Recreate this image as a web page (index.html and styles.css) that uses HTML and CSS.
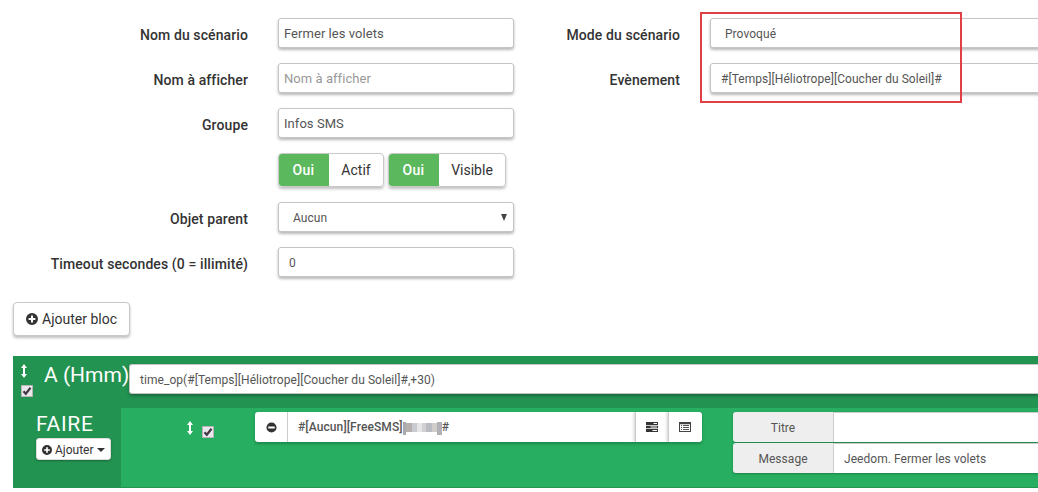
FILE: index.html
```html
<!DOCTYPE html>
<html lang="fr">
<head>
<meta charset="utf-8">
<title>Scénario</title>
<link rel="stylesheet" href="styles.css">
</head>
<body>
<svg class="defs" aria-hidden="true">
  <symbol id="plus" viewBox="0 0 12 12"><path fill="currentColor" fill-rule="evenodd" d="M6 0a6 6 0 1 0 0 12A6 6 0 0 0 6 0zM5 2.6h2V5h2.4v2H7v2.4H5V7H2.6V5H5z"/></symbol>
  <symbol id="minus" viewBox="0 0 12 12"><path fill="currentColor" fill-rule="evenodd" d="M6 .5a5.5 5.5 0 1 0 0 11 5.5 5.5 0 0 0 0-11zM2.5 4.8h7v2.4h-7z"/></symbol>
  <symbol id="arrows" viewBox="0 0 6 14"><path fill="currentColor" d="M3 0l3 4H4v6h2l-3 4-3-4h2V4H0z"/></symbol>
  <symbol id="check" viewBox="0 0 12 12"><path fill="#ebe8eb" stroke="#b9b4b9" d="M.5.5h11v11H.5z"/><path fill="none" stroke="#443848" stroke-width="2.200" d="M2.500 6.200l2.300 2.500 4.700-6"/></symbol>
  <symbol id="tasks" viewBox="0 0 12 10"><path fill="#333" d="M0 0h12v3H0zM0 3.700h12v2.600H0zM0 7h12v3H0z"/><path fill="#fff" d="M7.500 1H11v1H7.500zM4.500 4.500H11v1H4.500zM6.500 8H11v1H6.500z"/></symbol>
  <symbol id="list" viewBox="0 0 12 10"><path fill="#444" d="M0 0h12v10H0z"/><path fill="#fff" d="M1 2.200h10V9H1z"/><path fill="#555" d="M2 3h1v1H2zM4 3h6v1H4zM2 5h1v1H2zM4 5h6v1H4zM2 7h1v1H2zM4 7h6v1H4z"/></symbol>
</svg>

<main class="page">
  <form class="settings">
    <div class="fields">
      <label class="label">Nom du scénario</label><div class="control tight">Fermer les volets</div>
      <label class="label">Nom à afficher</label><div class="control tight placeholder">Nom à afficher</div>
      <label class="label">Groupe</label><div class="control tight">Infos SMS</div>
      <span></span>
      <div class="toggles">
        <div class="toggle"><b class="on">Oui</b><span class="name">Actif</span></div>
        <div class="toggle"><b class="on">Oui</b><span class="name wide">Visible</span></div>
      </div>
      <label class="label">Objet parent</label><div class="control select">Aucun<span class="arrow"></span></div>
      <label class="label">Timeout secondes (0 = illimité)</label><div class="control">0</div>
    </div>
    <div class="fields mode">
      <label class="label">Mode du scénario</label><div class="control select">Provoqué</div>
      <label class="label">Evènement</label><div class="control">#[Temps][Héliotrope][Coucher du Soleil]#</div>
      <div class="highlight"></div>
    </div>
  </form>

  <button class="add-block"><svg class="icon"><use href="#plus"/></svg><span>Ajouter bloc</span></button>

  <section class="block">
    <header class="when">
      <div class="handles"><svg class="move"><use href="#arrows"/></svg><svg class="check"><use href="#check"/></svg></div>
      <h2 class="title">A (Hmm)</h2>
      <div class="control expression">time_op(#[Temps][Héliotrope][Coucher du Soleil]#,+30)</div>
    </header>
    <div class="do">
      <div class="side">
        <h2 class="title">FAIRE</h2>
        <button class="add-action"><svg class="icon small"><use href="#plus"/></svg><span>Ajouter</span><i class="caret"></i></button>
      </div>
      <div class="actions">
        <svg class="move"><use href="#arrows"/></svg>
        <svg class="check"><use href="#check"/></svg>
        <div class="command">
          <span class="cell remove"><svg class="minus"><use href="#minus"/></svg></span>
          <span class="value">#[Aucun][FreeSMS]<svg class="mosaic" viewBox="0 0 39 13"><path fill="#a9a9ae" d="M0 0h3v13H0z"/><path fill="#b5b0ad" d="M3 1h6v9H3z"/><path fill="#c9cbd0" d="M9 1h5v9H9z"/><path fill="#e6e6e8" d="M14 1h5v9h-5z"/><path fill="#d2d0d2" d="M19 1h4v9h-4z"/><path fill="#b9bcc3" d="M23 1h6v9h-6z"/><path fill="#cfccca" d="M29 1h5v9h-5z"/><path fill="#b0b0b6" d="M34 0h5v13h-5z"/></svg>#</span>
          <span class="cell"><svg class="glyph"><use href="#tasks"/></svg></span>
          <span class="cell"><svg class="glyph"><use href="#list"/></svg></span>
        </div>
        <div class="options">
          <div class="option"><span class="addon">Titre</span><span class="entry"></span></div>
          <div class="option"><span class="addon">Message</span><span class="entry">Jeedom. Fermer les volets</span></div>
        </div>
      </div>
    </div>
  </section>
</main>
</body>
</html>
```
FILE: styles.css
```css
* { box-sizing: border-box; }
body { margin: 0; background: #fff; color: #333; font: 14px/20px Roboto, sans-serif; overflow: hidden; }
button { font: inherit; color: inherit; }
.defs { position: absolute; width: 0; height: 0; }
.page { width: 1038px; height: 492px; padding: 18px 0 0 13px; overflow: hidden; }
.settings { display: flex; }
.fields { display: grid; grid-template-columns: 235px 236px; column-gap: 30px; row-gap: 15px; align-content: start; }
.fields.mode { position: relative; grid-template-columns: 166px 340px; }
.label { padding-top: 7px; text-align: right; font-weight: 500; letter-spacing: .1px; line-height: 20px; white-space: nowrap; height: 30px; }
.control { height: 30px; padding: 0 10px; border: 1px solid #c5c5c5; border-radius: 3px; background: #fff; color: #555; font-size: 12px; letter-spacing: .05px; line-height: 30px; white-space: nowrap; box-shadow: 0 2px 3px rgba(0,0,0,.28); }
.tight { padding: 0 5px; font-size: 13px; letter-spacing: .05px; line-height: 29px; }
.placeholder { color: #999; }
.select { position: relative; padding-left: 14px; }
.arrow { position: absolute; right: 6px; top: 11px; border: 3.500px solid transparent; border-top: 7px solid #444; border-bottom: 0; }
.toggles { display: flex; gap: 4px; height: 34px; }
.toggle { display: flex; border: 1px solid #c9c9c9; border-radius: 4px; box-shadow: 0 2px 3px rgba(0,0,0,.25); overflow: hidden; }
.on { width: 51px; margin: -1px 0 -1px -1px; background: #5cb85c; color: #fff; font-weight: 500; letter-spacing: .3px; text-align: center; line-height: 34px; }
.name { width: 54px; text-align: center; line-height: 32px; }
.name.wide { width: 66px; }
.highlight { position: absolute; left: 186px; top: -6px; width: 262px; height: 91px; border: 2px solid #e04045; }
.add-block { display: flex; align-items: center; gap: 4px; margin-top: 25px; width: 117px; height: 34px; padding: 0 12px; border: 1px solid #c8c8c8; border-radius: 4px; background: #fff; box-shadow: 0 2px 3px rgba(0,0,0,.25); white-space: nowrap; }
.icon { width: 12px; height: 12px; flex: none; }
.block { margin-top: 20px; height: 132px; background: #239351; color: #fff; }
.when { display: flex; height: 52px; }
.handles { display: flex; flex-direction: column; width: 31px; padding: 8px 0 0 8px; gap: 7px; }
.move { width: 6px; height: 14px; flex: none; }
.check { width: 12px; height: 12px; flex: none; }
.title { margin: 0; font-size: 21px; font-weight: 400; line-height: 24px; white-space: nowrap; }
.when .title { width: 85px; padding-top: 7px; }
.side .title { letter-spacing: .7px; }
.expression { flex: 1; margin-top: 8px; border-right: 0; border-radius: 3px 0 0 3px; }
.do { display: flex; height: 80px; }
.side { width: 108px; padding: 4px 0 0 23px; }
.add-action { display: flex; align-items: center; gap: 3px; margin-top: 2px; height: 22px; width: 75px; padding: 1px 5px 0; border: 1px solid #ddd; border-radius: 3px; background: #fff; color: #333; font-size: 12px; box-shadow: 0 1px 2px rgba(0,0,0,.3); }
.small { width: 10px; height: 10px; }
.caret { border: 4px solid transparent; border-top-color: #333; border-bottom: 0; }
.actions { display: flex; flex: 1; height: 79px; padding: 4px 0 0 65px; background: #27ae60; }
.actions .move { margin: 9px 0 0 1px; }
.actions .check { margin: 14px 0 0 9px; }
.command { display: flex; width: 447px; height: 30px; margin-left: 41px; border-radius: 3px; background: #fff; box-shadow: 0 2px 3px rgba(0,0,0,.22); color: #333; overflow: hidden; }
.cell { display: flex; align-items: center; justify-content: center; width: 33px; padding-right: 1px; border-left: 1px solid #ccc; box-shadow: -1px 0 3px rgba(0,0,0,.2); }
.cell.remove { border: 0; padding: 0; width: 32px; box-shadow: none; }
.cell:last-child { width: 34px; }
.minus { width: 11px; height: 11px; }
.glyph { width: 12px; height: 10px; }
.value { flex: 1; padding-left: 10px; border-left: 1px solid #ccc; color: #555; font-size: 12px; font-weight: 500; letter-spacing: .1px; line-height: 31px; white-space: nowrap; }
.mosaic { width: 39px; height: 13px; vertical-align: -4px; }
.options { display: flex; flex: 1; flex-direction: column; gap: 1px; margin-left: 31px; }
.option { display: flex; height: 30px; font-size: 12px; letter-spacing: .05px; line-height: 32px; color: #555; box-shadow: 0 1px 2px rgba(0,0,0,.25); border-radius: 3px 0 0 3px; }
.addon { width: 100px; background: #eee; border-radius: 3px 0 0 3px; text-align: center; }
.entry { flex: 1; padding-left: 10px; background: #fff; border-left: 1px solid #ccc; border-top: 1px solid #ccc; line-height: 30px; white-space: nowrap; }
```
